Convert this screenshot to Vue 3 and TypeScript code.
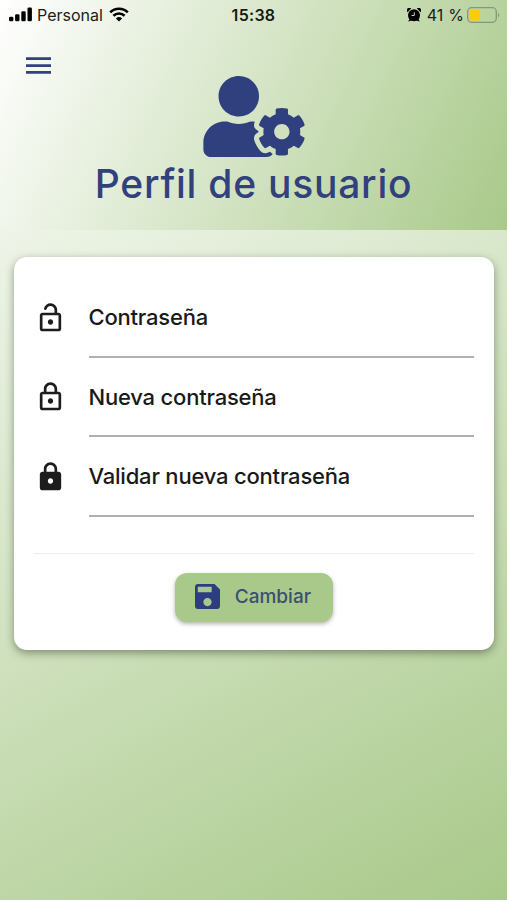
<script setup lang="ts">
interface Field {
  id: string
  label: string
  icon: string
}

const fields: Field[] = [
  {
    id: 'current',
    label: 'Contraseña',
    icon: 'M12 17c1.1 0 2-.9 2-2s-.9-2-2-2-2 .9-2 2 .9 2 2 2zm6-9h-1V6c0-2.76-2.24-5-5-5-2.28 0-4.27 1.54-4.84 3.75-.14.54.18 1.08.72 1.22.53.14 1.08-.18 1.22-.72C9.44 3.93 10.63 3 12 3c1.65 0 3 1.35 3 3v2H6c-1.1 0-2 .9-2 2v10c0 1.1.9 2 2 2h12c1.1 0 2-.9 2-2V10c0-1.1-.9-2-2-2zm0 12H6V10h12v10z',
  },
  {
    id: 'next',
    label: 'Nueva contraseña',
    icon: 'M18 8h-1V6c0-2.76-2.24-5-5-5S7 3.24 7 6v2H6c-1.1 0-2 .9-2 2v10c0 1.1.9 2 2 2h12c1.1 0 2-.9 2-2V10c0-1.1-.9-2-2-2zM9 6c0-1.66 1.34-3 3-3s3 1.34 3 3v2H9V6zm9 14H6V10h12v10zm-6-3c1.1 0 2-.9 2-2s-.9-2-2-2-2 .9-2 2 .9 2 2 2z',
  },
  {
    id: 'confirm',
    label: 'Validar nueva contraseña',
    icon: 'M18 8h-1V6c0-2.76-2.24-5-5-5S7 3.24 7 6v2H6c-1.1 0-2 .9-2 2v10c0 1.1.9 2 2 2h12c1.1 0 2-.9 2-2V10c0-1.1-.9-2-2-2zm-6 9c-1.1 0-2-.9-2-2s.9-2 2-2 2 .9 2 2-.9 2-2 2zM9 8V6c0-1.66 1.34-3 3-3s3 1.34 3 3v2H9z',
  },
]
</script>

<template>
  <div class="screen">
    <header class="header">
      <div class="status">
        <div class="status-left">
          <svg class="signal" viewBox="0 0 23 15">
            <rect x="0" y="9.7" width="4.4" height="4.6" rx="1.4" />
            <rect x="6.1" y="7.2" width="4.4" height="7.1" rx="1.3" />
            <rect x="12.3" y="4.2" width="4.4" height="10.1" rx="1.3" />
            <rect x="18.5" y="0.4" width="4.4" height="13.9" rx="1.3" />
          </svg>
          <span class="carrier">Personal</span>
          <svg class="wifi" viewBox="0 0 20 15">
            <path d="M1.2 5.4a12.6 12.6 0 0 1 17.6 0" />
            <path d="M4.4 8.7a8.1 8.1 0 0 1 11.2 0" />
            <path class="wifi-dot" d="M6.9 11.5a4.5 4.5 0 0 1 6.2 0L10 14.6z" />
          </svg>
        </div>
        <span class="time">15:38</span>
        <div class="status-right">
          <svg class="alarm" viewBox="0 0 14 14">
            <circle cx="7" cy="7.2" r="6" />
            <path d="M.5 4.2a2.4 2.4 0 0 1 3.6-3.6zM13.5 4.2a2.4 2.4 0 0 0-3.6-3.6zM1.2 13.6l1.8-3.4 2.6 2zM12.8 13.6l-1.8-3.4-2.6 2z" />
            <path class="hands" d="M7.3 4.2v3.3H4.6" />
          </svg>
          <span class="percent">41 %</span>
          <svg class="battery" viewBox="0 0 33 16">
            <rect class="shell" x=".7" y=".7" width="28.6" height="14.6" rx="4" />
            <rect class="charge" x="2.4" y="2.4" width="10.8" height="11.2" rx="2.4" />
            <path class="cap" d="M31 5.8c1.6.7 1.6 3.7 0 4.4z" />
          </svg>
        </div>
      </div>
      <button class="menu" aria-label="Menú">
        <svg viewBox="0 0 24 16"><path d="M0 0h24v2.7H0zM0 6.7h24v2.7H0zM0 13.3h24V16H0z" /></svg>
      </button>
      <svg class="profile" viewBox="0 0 640 512">
        <path d="M610.5 373.3c2.6-14.1 2.6-28.5 0-42.6l25.8-14.9c3-1.7 4.3-5.2 3.3-8.5-6.7-21.6-18.2-41.2-33.2-57.4-2.3-2.5-6-3.1-9-1.4l-25.8 14.9c-10.9-9.3-23.4-16.5-36.9-21.3v-29.8c0-3.4-2.4-6.4-5.7-7.1-22.3-5-45-4.8-66.2 0-3.3.7-5.7 3.7-5.7 7.1v29.8c-13.5 4.8-26 12-36.9 21.3l-25.8-14.9c-2.9-1.7-6.7-1.1-9 1.4-15 16.2-26.5 35.8-33.2 57.4-1 3.3.4 6.8 3.3 8.5l25.8 14.9c-2.6 14.1-2.6 28.5 0 42.6l-25.8 14.9c-3 1.7-4.3 5.2-3.3 8.5 6.7 21.6 18.2 41.1 33.2 57.4 2.3 2.5 6 3.1 9 1.4l25.8-14.9c10.9 9.3 23.4 16.5 36.9 21.3v29.8c0 3.4 2.4 6.4 5.7 7.1 22.3 5 45 4.8 66.2 0 3.3-.7 5.7-3.7 5.7-7.1v-29.8c13.5-4.8 26-12 36.9-21.3l25.8 14.9c2.9 1.7 6.7 1.1 9-1.4 15-16.2 26.5-35.8 33.2-57.4 1-3.3-.4-6.8-3.3-8.5l-25.8-14.9zM496 400.5c-26.8 0-48.5-21.8-48.5-48.5s21.8-48.5 48.5-48.5 48.5 21.8 48.5 48.5-21.7 48.5-48.5 48.5zM224 256c70.7 0 128-57.3 128-128S294.7 0 224 0 96 57.3 96 128s57.3 128 128 128zm201.2 226.5c-2.3-1.2-4.6-2.6-6.8-3.9l-7.9 4.6c-6 3.4-12.8 5.3-19.6 5.3-10.9 0-21.4-4.6-28.9-12.6-18.3-19.8-32.3-43.9-40.2-69.6-5.5-17.7 1.9-36.4 17.9-45.7l7.9-4.6c-.1-2.6-.1-5.2 0-7.8l-7.9-4.6c-16-9.2-23.4-28-17.9-45.7.9-2.9 2.2-5.8 3.2-8.7-3.8-.3-7.5-1.2-11.4-1.2h-16.7c-22.2 10.2-46.9 16-72.9 16s-50.6-5.8-72.9-16h-16.7C60.2 288 0 348.2 0 422.4V464c0 26.5 21.5 48 48 48h352c15.5 0 29.5-7.5 38.3-19-4.8-3.1-9.1-6.5-13.1-10.5z" />
      </svg>
      <h1 class="title">Perfil de usuario</h1>
    </header>

    <main class="card">
      <div v-for="field in fields" :key="field.id" class="row">
        <svg class="lock" viewBox="0 0 24 24"><path :d="field.icon" /></svg>
        <div class="field"><span class="label">{{ field.label }}</span></div>
      </div>
      <div class="actions">
        <button class="save">
          <svg class="disk" viewBox="3 3 18 18">
            <path d="M17 3H5c-1.11 0-2 .9-2 2v14c0 1.1.89 2 2 2h14c1.1 0 2-.9 2-2V7l-4-4zm-5 16c-1.66 0-3-1.34-3-3s1.34-3 3-3 3 1.34 3 3-1.34 3-3 3zm3-10H5V5h10v4z" />
          </svg>
          <span class="save-text">Cambiar</span>
        </button>
      </div>
    </main>
  </div>
</template>

<style>
body {
  margin: 0;
}
</style>

<style scoped>
.screen {
  box-sizing: border-box;
  height: 900px;
  overflow: hidden;
  font-family: Inter, 'Liberation Sans', sans-serif;
  background: linear-gradient(150.6deg, #ffffff, #a9c98a);
}
.header {
  display: flex;
  flex-direction: column;
  align-items: center;
  height: 230px;
  background: linear-gradient(114.4deg, #ffffff, #a9c98a);
}
.status {
  display: grid;
  grid-template-columns: 1fr auto 1fr;
  align-items: center;
  align-self: stretch;
  box-sizing: border-box;
  height: 29px;
  padding: 0 7px 0 9px;
  font-size: 16px;
  color: #1c2019;
}
.status-left,
.status-right {
  display: flex;
  align-items: center;
}
.status-right {
  justify-content: flex-end;
}
.signal {
  width: 23px;
  height: 15px;
  fill: #000;
}
.carrier {
  margin-left: 5px;
}
.wifi {
  width: 20px;
  height: 15px;
  margin-left: 6px;
  fill: none;
  stroke: #000;
  stroke-width: 2.6;
}
.wifi .wifi-dot {
  fill: #000;
  stroke: none;
}
.time {
  margin-right: 2px;
  font-weight: 600;
  letter-spacing: 0.3px;
  color: #151a12;
}
.alarm {
  width: 14px;
  height: 14px;
  fill: #000;
}
.hands {
  fill: none;
  stroke: #c5dab0;
  stroke-width: 1;
}
.percent {
  margin: 0 3px 0 6px;
  letter-spacing: 0.15px;
}
.battery {
  width: 33px;
  height: 16px;
}
.shell {
  fill: none;
  stroke: #839873;
  stroke-width: 1.3;
}
.charge {
  fill: #fecb0a;
}
.cap {
  fill: #839873;
}
.menu {
  display: flex;
  align-self: flex-start;
  margin: 28px 0 0 26px;
  padding: 0;
  border: 0;
  background: none;
}
.menu svg {
  width: 25px;
  height: 17px;
  fill: #32417f;
}
.profile {
  width: 102px;
  height: 81px;
  margin-top: 1.5px;
  fill: #30407f;
}
.title {
  margin: 3.5px 0 0;
  font-size: 39px;
  font-weight: 500;
  line-height: 48px;
  letter-spacing: 0.75px;
  color: #32417c;
  white-space: nowrap;
}
.card {
  box-sizing: border-box;
  height: 393px;
  margin: 26.7px 13.5px 0 14px;
  padding: 21.3px 20px 0;
  border-radius: 13px;
  background: #fff;
  box-shadow: 0 3px 8px rgba(50, 60, 40, 0.5);
}
.row {
  display: flex;
  align-items: center;
  height: 79.6px;
}
.lock {
  flex: none;
  width: 33px;
  height: 32px;
  margin-right: 21.5px;
  fill: #1d1d1d;
}
.field {
  box-sizing: border-box;
  display: flex;
  flex: 1;
  align-items: center;
  height: 79.6px;
  padding-top: 1px;
  border-bottom: 2px solid #b0b0b0;
}
.label {
  font-size: 22px;
  font-weight: 500;
  letter-spacing: -0.2px;
  color: #191919;
  white-space: nowrap;
}
.actions {
  display: flex;
  justify-content: center;
  margin-top: 36.2px;
  padding-top: 19px;
  border-top: 1px solid #eee;
}
.save {
  display: flex;
  align-items: center;
  gap: 15px;
  box-sizing: border-box;
  width: 158px;
  height: 49px;
  padding: 0 20px;
  border: 0;
  border-radius: 12px;
  background: #a9c98a;
  box-shadow: 0 2px 4px rgba(0, 0, 0, 0.3);
  font: 500 19px Inter, 'Liberation Sans', sans-serif;
  color: #3b4f74;
}
.save-text {
  padding-bottom: 2px;
}
.disk {
  flex: none;
  width: 25px;
  height: 25px;
  padding-bottom: 1px;
  fill: #2c3d82;
}
</style>
